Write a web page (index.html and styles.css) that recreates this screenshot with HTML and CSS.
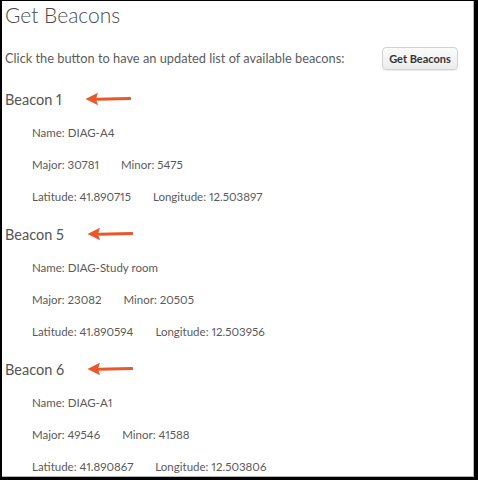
FILE: index.html
```html
<!DOCTYPE html>
<html>
<head>
<meta charset="utf-8">
<link rel="stylesheet" href="styles.css">
</head>
<body>
<div class="frame">
  <div class="content">
    <h1 class="title">Get Beacons</h1>
    <div class="intro">
      <p class="intro-text">Click the button to have an updated list of available beacons:</p>
      <button class="btn">Get Beacons</button>
    </div>

    <section class="beacon">
      <h2 class="beacon-title">Beacon 1
        <svg class="arrow" width="46" height="14" viewBox="0 0 46 14"><path d="M12 7.2 L45 6.6" stroke="#e9572b" stroke-width="3" fill="none" stroke-linecap="round"/><path d="M0.5 7 L13 0.8 L11 7 L13 13.2 Z" fill="#e9572b"/></svg>
      </h2>
      <div class="row">Name: DIAG-A4</div>
      <div class="row"><span class="cell">Major: 30781</span><span class="cell">Minor: 5475</span></div>
      <div class="row"><span class="cell">Latitude: 41.890715</span><span class="cell">Longitude: 12.503897</span></div>
    </section>

    <section class="beacon">
      <h2 class="beacon-title">Beacon 5
        <svg class="arrow" width="46" height="14" viewBox="0 0 46 14"><path d="M12 7.2 L45 6.6" stroke="#e9572b" stroke-width="3" fill="none" stroke-linecap="round"/><path d="M0.5 7 L13 0.8 L11 7 L13 13.2 Z" fill="#e9572b"/></svg>
      </h2>
      <div class="row">Name: DIAG-Study room</div>
      <div class="row"><span class="cell">Major: 23082</span><span class="cell">Minor: 20505</span></div>
      <div class="row"><span class="cell">Latitude: 41.890594</span><span class="cell">Longitude: 12.503956</span></div>
    </section>

    <section class="beacon">
      <h2 class="beacon-title">Beacon 6
        <svg class="arrow" width="46" height="14" viewBox="0 0 46 14"><path d="M12 7.2 L45 6.6" stroke="#e9572b" stroke-width="3" fill="none" stroke-linecap="round"/><path d="M0.5 7 L13 0.8 L11 7 L13 13.2 Z" fill="#e9572b"/></svg>
      </h2>
      <div class="row">Name: DIAG-A1</div>
      <div class="row"><span class="cell">Major: 49546</span><span class="cell">Minor: 41588</span></div>
      <div class="row"><span class="cell">Latitude: 41.890867</span><span class="cell">Longitude: 12.503806</span></div>
    </section>
  </div>
</div>
</body>
</html>
```
FILE: styles.css
```css
html, body {
  margin: 0;
  padding: 0;
  background: #000;
}
body {
  width: 478px;
  height: 480px;
  overflow: hidden;
  font-family: Lato, "Open Sans", sans-serif;
  color: #5a5a5a;
  font-variant-numeric: proportional-nums;
}
.frame {
  box-sizing: border-box;
  width: 478px;
  height: 480px;
  border-style: solid;
  border-color: #000;
  border-width: 1px 4px 3px 2px;
  background: #fff;
  box-shadow: inset -1px -1px 0 #b5b5b5;
  overflow: hidden;
}
.content {
  padding-left: 3px;
  padding-right: 16px;
  display: flex;
  flex-direction: column;
}
.title {
  margin: 0;
  font-size: 21px;
  font-weight: 300;
  line-height: 28px;
  color: #4a4a4a;
}
.intro {
  margin-top: 17px;
  display: flex;
  align-items: center;
  justify-content: space-between;
  height: 24px;
}
.intro-text {
  margin: 0;
  font-size: 12.8px;
  line-height: 20px;
  white-space: nowrap;
  color: #5c5c5c;
}
.btn {
  box-sizing: border-box;
  width: 76px;
  height: 23px;
  padding: 0;
  border: 1px solid #d2d2d2;
  border-radius: 4px;
  background: linear-gradient(#fbfbfb, #ececec);
  font-family: Lato, "Open Sans", sans-serif;
  font-size: 11px;
  font-weight: 700;
  color: #333;
  box-shadow: 0 1px 1px rgba(0,0,0,0.08);
}
.beacon {
  display: flex;
  flex-direction: column;
  margin-bottom: 3px;
}
.beacon:first-of-type {
  margin-top: 11px;
}
.beacon-title {
  margin: 0;
  height: 36px;
  display: flex;
  align-items: center;
  font-size: 14.5px;
  font-weight: 400;
  color: #555;
}
.arrow {
  margin-left: 23px;
  margin-top: -1px;
}
.row {
  height: 32px;
  line-height: 32px;
  padding-left: 27px;
  font-size: 11.5px;
  color: #5a5a5a;
  white-space: nowrap;
}
.cell + .cell {
  margin-left: 22px;
}
```
